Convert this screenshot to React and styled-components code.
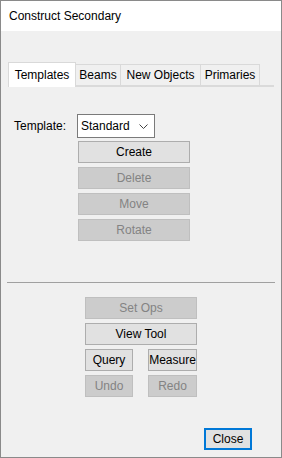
import React from "react";
import styled, { createGlobalStyle } from "styled-components";

const Global = createGlobalStyle`
  html, body { margin: 0; padding: 0; background: #f0f0f0; }
  * { box-sizing: border-box; }
`;

const Window = styled.div`
  width: 282px;
  height: 458px;
  border: 1px solid #8a8a8a;
  background: #f0f0f0;
  display: flex;
  flex-direction: column;
  font-family: "Liberation Sans", Arial, sans-serif;
  font-size: 12px;
  color: #000;
`;

const TitleBar = styled.div`
  height: 30px;
  background: #fff;
  padding-left: 8px;
  display: flex;
  align-items: center;
  font-size: 12px;
`;

const Body = styled.div`
  flex: 1;
  padding: 31px 7px 7px 7px;
  display: flex;
  flex-direction: column;
`;

const TabRow = styled.div`
  display: flex;
  align-items: flex-end;
  height: 25px;
  border-bottom: 2px solid #dadada;
`;

const Tab = styled.div`
  width: ${({ $w }) => $w}px;
  height: ${({ $active }) => ($active ? "25px" : "21px")};
  margin-bottom: ${({ $active }) => ($active ? "-2px" : "0")};
  margin-left: ${({ $first }) => ($first ? "0" : "-1px")};
  background: ${({ $active }) => ($active ? "#fff" : "#f0f0f0")};
  border: 1px solid #d9d9d9;
  border-bottom: none;
  display: flex;
  align-items: center;
  justify-content: center;
  position: relative;
  z-index: ${({ $active }) => ($active ? 1 : 0)};
`;

const Section = styled.div`
  padding-left: 6px;
  margin-top: 27px;
  display: flex;
  flex-direction: column;
`;

const FieldRow = styled.div`
  display: flex;
  align-items: center;
`;

const Label = styled.div`
  width: 63px;
`;

const Select = styled.div`
  width: 78px;
  height: 24px;
  background: #fff;
  border: 1px solid #7a7a7a;
  display: flex;
  align-items: center;
  justify-content: space-between;
  padding: 0 6px 0 3px;
`;

const Stack = styled.div`
  display: flex;
  flex-direction: column;
  gap: 4px;
  width: 112px;
  margin-left: ${({ $left }) => $left}px;
  margin-top: ${({ $top }) => $top}px;
`;

const Button = styled.div`
  height: 22px;
  width: ${({ $w }) => ($w ? `${$w}px` : "100%")};
  display: flex;
  align-items: center;
  justify-content: center;
  background: ${({ disabled }) => (disabled ? "#cccccc" : "#e1e1e1")};
  border: 1px solid ${({ disabled }) => (disabled ? "#bfbfbf" : "#adadad")};
  color: ${({ disabled }) => (disabled ? "#838383" : "#000")};
`;

const Pair = styled.div`
  display: flex;
  justify-content: space-between;
`;

const Separator = styled.div`
  height: 1px;
  background: #a0a0a0;
  margin: 41px -1px 0 -1px;
`;

const Footer = styled.div`
  margin-top: auto;
  display: flex;
  justify-content: flex-end;
  padding-right: 22px;
`;

const CloseButton = styled(Button)`
  border: 2px solid #0078d7;
`;

const Chevron = () => (
  <svg width="9" height="5" viewBox="0 0 9 5">
    <path d="M0.5 0.5 L4.5 4.5 L8.5 0.5" fill="none" stroke="#444" strokeWidth="1" />
  </svg>
);

export default function App() {
  return (
    <Window>
      <Global />
      <TitleBar>Construct Secondary</TitleBar>
      <Body>
        <TabRow>
          <Tab $active $first $w={68}>Templates</Tab>
          <Tab $w={46}>Beams</Tab>
          <Tab $w={81}>New Objects</Tab>
          <Tab $w={60}>Primaries</Tab>
        </TabRow>
        <Section>
          <FieldRow>
            <Label>Template:</Label>
            <Select>
              <span>Standard</span>
              <Chevron />
            </Select>
          </FieldRow>
          <Stack $left={64} $top={3}>
            <Button>Create</Button>
            <Button disabled>Delete</Button>
            <Button disabled>Move</Button>
            <Button disabled>Rotate</Button>
          </Stack>
        </Section>
        <Separator />
        <Stack $left={77} $top={14}>
          <Button disabled>Set Ops</Button>
          <Button>View Tool</Button>
          <Pair>
            <Button $w={48}>Query</Button>
            <Button $w={49}>Measure</Button>
          </Pair>
          <Pair>
            <Button $w={48} disabled>Undo</Button>
            <Button $w={49} disabled>Redo</Button>
          </Pair>
        </Stack>
        <Footer>
          <CloseButton $w={48}>Close</CloseButton>
        </Footer>
      </Body>
    </Window>
  );
}
